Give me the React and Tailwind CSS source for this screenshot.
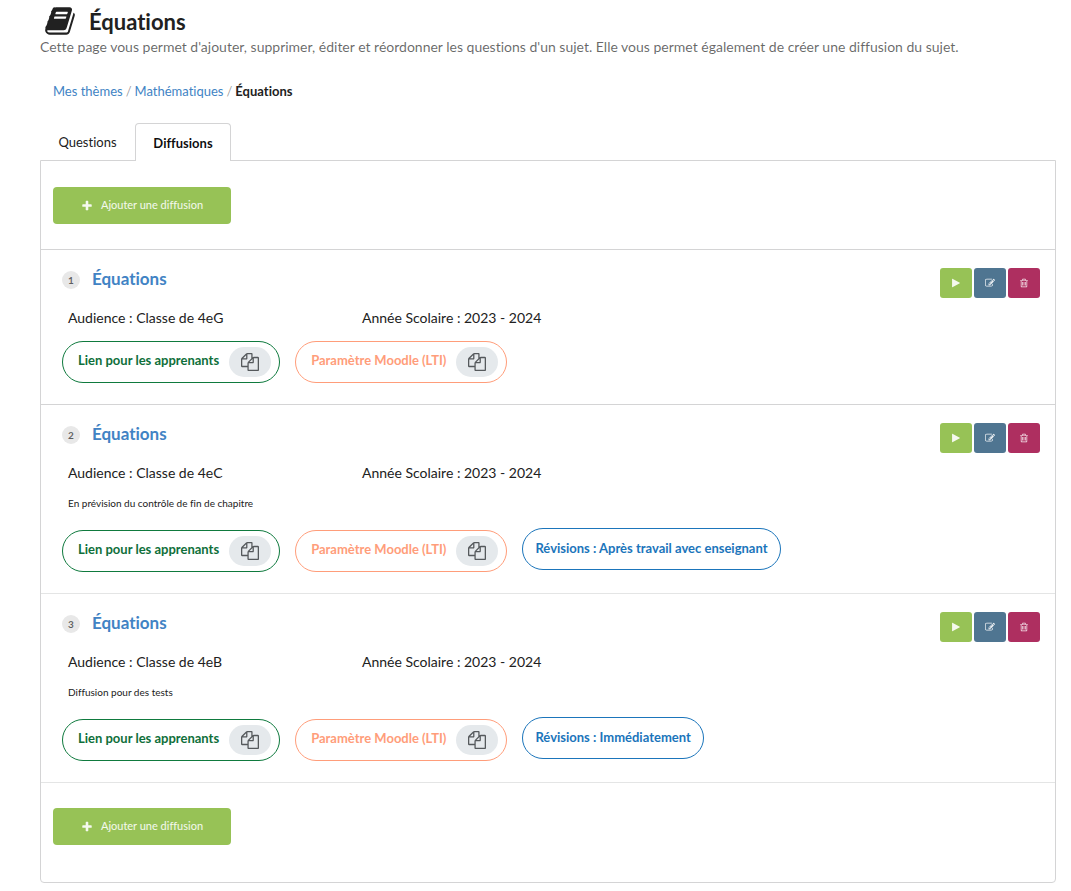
import React from "react";

const ICONS = {
  book: "M1703 478q40 57 18 129l-275 906q-19 64-76.5 107.5t-122.5 43.5h-923q-77 0-148.5-53.5t-99.5-131.5q-24-67-2-127 0-4 3-27t4-37q1-8-3-21.5t-3-19.5q2-11 8-21t16.5-23.5 16.5-23.5q23-38 45-91.5t30-91.5q3-10 .5-30t-.5-28q3-11 17-28t17-23q21-36 42-92t25-90q1-9-2.5-32t.5-28q4-13 22-30.5t22-22.5q19-26 42.5-84.5t27.5-96.5q1-8-3-25.5t-2-26.5q2-8 9-18t18-23 17-21q8-12 16.5-30.5t15-35 16-36 19.5-32 26.5-23.5 36-11.5 47.5 5.5l-1 3q38-9 51-9h761q74 0 114 56t18 130l-274 906q-36 119-71.5 153.5t-128.5 34.5h-869q-27 0-38 15-11 16-1 43 24 70 144 70h923q29 0 56-15.5t35-41.5l300-987q7-22 5-57 38 15 59 43zm-1064 2q-4 13 2 22.5t20 9.5h608q13 0 25.5-9.5t16.5-22.5l21-64q4-13-2-22.5t-20-9.5h-608q-13 0-25.5 9.5t-16.5 22.5zm-83 256q-4 13 2 22.5t20 9.5h608q13 0 25.5-9.5t16.5-22.5l21-64q4-13-2-22.5t-20-9.5h-608q-13 0-25.5 9.5t-16.5 22.5z",
  copy: "M1696 384q40 0 68 28t28 68v1216q0 40-28 68t-68 28h-960q-40 0-68-28t-28-68v-288h-544q-40 0-68-28t-28-68v-672q0-40 20-88t48-76l408-408q28-28 76-48t88-20h416q40 0 68 28t28 68v328q68-40 128-40h416zm-544 213l-299 299h299v-299zm-640-384l-299 299h299v-299zm196 647l316-316v-416h-384v416q0 40-28 68t-68 28h-416v640h512v-256q0-40 20-88t48-76zm956 804v-1152h-384v416q0 40-28 68t-68 28h-416v640h896z",
  edit: "M888 1184l116-116-152-152-116 116v56h96v96h56zm440-720q-16-16-33 1l-350 350q-17 17-1 33t33-1l350-350q17-17 1-33zm80 594v190q0 119-84.5 203.5t-203.5 84.5h-832q-119 0-203.5-84.5t-84.5-203.5v-832q0-119 84.5-203.5t203.5-84.5h832q63 0 117 25 15 7 18 23 3 17-9 29l-49 49q-14 14-32 8-23-6-45-6h-832q-66 0-113 47t-47 113v832q0 66 47 113t113 47h832q66 0 113-47t47-113v-126q0-13 9-22l64-64q15-15 35-7t20 29zm-96-738l288 288-672 672h-288v-288zm444 132l-92 92-288-288 92-92q28-28 68-28t68 28l152 152q28 28 28 68t-28 68z",
  trash: "M704 736v576q0 14-9 23t-23 9h-64q-14 0-23-9t-9-23v-576q0-14 9-23t23-9h64q14 0 23 9t9 23zm256 0v576q0 14-9 23t-23 9h-64q-14 0-23-9t-9-23v-576q0-14 9-23t23-9h64q14 0 23 9t9 23zm256 0v576q0 14-9 23t-23 9h-64q-14 0-23-9t-9-23v-576q0-14 9-23t23-9h64q14 0 23 9t9 23zm128 724v-948h-896v948q0 22 7 40.5t14.5 27 10.5 8.5h832q3 0 10.5-8.5t14.5-27 7-40.5zm-672-1076h448l-48-117q-7-9-17-11h-317q-10 2-17 11zm928 32v64q0 14-9 23t-23 9h-96v948q0 83-47 143.5t-113 60.5h-832q-66 0-113-58.5t-47-141.5v-952h-96q-14 0-23-9t-9-23v-64q0-14 9-23t23-9h309l70-167q15-37 54-63t79-26h320q40 0 79 26t54 63l70 167h309q14 0 23 9t9 23z",
  play: "M1576 927l-1328 738q-23 13-39.5 3t-16.5-36v-1472q0-26 16.5-36t39.5 3l1328 738q23 13 23 31t-23 31z",
  plus: "M1600 736v192q0 40-28 68t-68 28h-416v416q0 40-28 68t-68 28h-192q-40 0-68-28t-28-68v-416h-416q-40 0-68-28t-28-68v-192q0-40 28-68t68-28h416v-416q0-40 28-68t68-28h192q40 0 68 28t28 68v416h416q40 0 68 28t28 68z",
};

function Icon({ name, className }) {
  return (
    <svg viewBox="0 0 1792 1792" fill="currentColor" aria-hidden="true" className={className}>
      <path d={ICONS[name]} />
    </svg>
  );
}

const diffusions = [
  { id: 1, audience: "Classe de 4eG", year: "2023 - 2024" },
  { id: 2, audience: "Classe de 4eC", year: "2023 - 2024", note: "En prévision du contrôle de fin de chapitre", revisions: "Après travail avec enseignant" },
  { id: 3, audience: "Classe de 4eB", year: "2023 - 2024", note: "Diffusion pour des tests", revisions: "Immédiatement" },
];

function AddButton() {
  return (
    <button type="button" className="flex h-[37px] w-[178px] items-center justify-center gap-2 rounded-[4px] bg-[#97c256] text-[11px] text-white/90">
      <Icon name="plus" className="size-3" />
      Ajouter une diffusion
    </button>
  );
}

function ActionButton({ icon, label, className }) {
  return (
    <button type="button" aria-label={label} className={`flex h-[30px] w-8 items-center justify-center rounded-[3px] text-white/90 ${className}`}>
      <Icon name={icon} className="size-[10px]" />
    </button>
  );
}

function CopyPill({ label, className }) {
  return (
    <div className={`flex h-[42px] items-center gap-[10px] self-end rounded-full border pr-2 pl-[15px] ${className}`}>
      <span className="pb-[2px]">{label}</span>
      <button type="button" aria-label={`Copier : ${label}`} className="flex h-[30px] w-[42px] items-center justify-center rounded-full bg-[#e5e9ec] text-[#55595c]">
        <Icon name="copy" className="size-[18px]" />
      </button>
    </div>
  );
}

function Diffusion({ item }) {
  return (
    <li className={`border-t pt-[18px] pr-[15px] pb-[21px] pl-[21px] ${item.id === 3 ? "border-[#e4e5e5]" : "border-[#d4d4d5]"}`}>
      <div className="flex items-start justify-between">
        <div className="flex items-start gap-3">
          <span className="mt-[3px] flex size-[18px] items-center justify-center rounded-full bg-[#e8e8e8] text-[10px] font-bold text-black/60">{item.id}</span>
          <h3 className="text-[17px] leading-[22px] font-bold">
            <a href="#diffusion" className="text-[#4183c4]">Équations</a>
          </h3>
        </div>
        <div className="flex gap-[2px]">
          <ActionButton icon="play" label="Lancer" className="bg-[#97c256]" />
          <ActionButton icon="edit" label="Modifier" className="bg-[#4f7591]" />
          <ActionButton icon="trash" label="Supprimer" className="bg-[#ae2f60]" />
        </div>
      </div>
      <div className="mt-[10px] flex pl-[6px] text-[14px] leading-5">
        <p className="w-[294px]">Audience : {item.audience}</p>
        <p>Année Scolaire : {item.year}</p>
      </div>
      {item.note && <p className="mt-3 mb-[17px] pl-[6px] text-[10px] leading-4">{item.note}</p>}
      <div className={`flex min-h-[44px] gap-[15px] text-[13px] font-bold ${item.note ? "" : "mt-[11px]"}`}>
        <CopyPill label="Lien pour les apprenants" className="border-[#0f7a3e] text-[#0f6f3a]" />
        <CopyPill label="Paramètre Moodle (LTI)" className="border-[#ff9d7a] text-[#ff9d7a]" />
        {item.revisions && (
          <span className="flex h-[42px] items-center self-start rounded-full border border-[#1b75bb] px-3 text-[#1b75bb]">
            Révisions : {item.revisions}
          </span>
        )}
      </div>
    </li>
  );
}

export default function App() {
  return (
    <main className="bg-white pt-[5px] pr-[15px] pb-2 pl-10 font-['Lato',sans-serif] text-[13px] text-[#212121] [font-variant-ligatures:no-common-ligatures]">
      <header>
        <h1 className="flex h-8 items-center gap-[13px] pl-1 text-[22px] font-bold">
          <Icon name="book" className="size-8" />
          Équations
        </h1>
        <p className="text-[14px] leading-5 text-black/60">
          Cette page vous permet d'ajouter, supprimer, éditer et réordonner les questions d'un sujet. Elle vous permet également de créer une diffusion du sujet.
        </p>
      </header>
      <nav aria-label="Fil d'Ariane" className="mt-6 flex gap-[3px] pl-[13px] leading-5">
        <a href="#themes" className="text-[#4183c4]">Mes thèmes</a>
        <span className="text-black/40">/</span>
        <a href="#maths" className="text-[#4183c4]">Mathématiques</a>
        <span className="text-black/40">/</span>
        <span className="font-bold">Équations</span>
      </nav>
      <div role="tablist" className="relative z-10 mt-[22px] -mb-px flex h-[38px]">
        <button type="button" role="tab" aria-selected="false" className="w-[95px] pt-[2px]">Questions</button>
        <button type="button" role="tab" aria-selected="true" className="w-24 rounded-t-[4px] border border-b-0 border-[#d4d4d5] bg-white pt-[2px] font-bold text-black/95">Diffusions</button>
      </div>
      <section className="rounded-b-[4px] border border-[#d4d4d5]">
        <div className="px-3 pt-[26px] pb-[25px]">
          <AddButton />
        </div>
        <ul className="border-b border-[#e4e5e5]">
          {diffusions.map((item) => (
            <Diffusion key={item.id} item={item} />
          ))}
        </ul>
        <div className="px-3 pt-[25px] pb-[37px]">
          <AddButton />
        </div>
      </section>
    </main>
  );
}
